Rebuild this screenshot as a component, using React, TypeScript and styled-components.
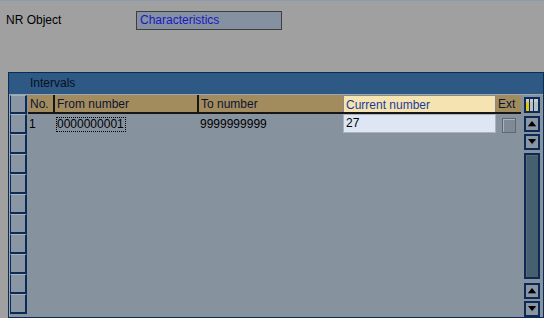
import styled, { createGlobalStyle } from 'styled-components';

const GlobalStyle = createGlobalStyle`
  html, body { margin: 0; padding: 0; background: #a0a0a0; }
  body { font-family: "Liberation Sans", Arial, sans-serif; font-size: 12px; }
`;

const navy = '#0b2a55';
const bodyBg = '#87929f';

const Screen = styled.div`
  width: 544px; height: 318px; box-sizing: border-box;
  border-top: 1px solid #8b9bb0;
  background: #a0a0a0; overflow: hidden;
`;

const HeaderArea = styled.div`
  height: 71px; box-sizing: border-box;
  padding: 10px 0 0 6px;
  display: flex; align-items: flex-start;
`;

const Label = styled.div`
  width: 130px; line-height: 19px; color: #000;
`;

const ReadField = styled.div`
  width: 146px; height: 19px; box-sizing: border-box;
  border: 1px solid #3e3e3e; background: #8591a0;
  color: #1818c4; padding-left: 3px; line-height: 17px;
`;

const Panel = styled.div`
  margin-left: 8px; width: 536px; height: 246px; box-sizing: border-box;
  border: 1px solid ${navy}; background: ${bodyBg};
  display: flex; flex-direction: column;
`;

const TitleBar = styled.div`
  height: 21px; background: #2d5984; color: #0a0f20;
  padding-left: 21px; line-height: 21px;
`;

const Body = styled.div`
  flex: 1; display: flex; border-top: 1px solid #9aa6b4;
`;

const SelectorCol = styled.div`
  width: 18px; display: flex; flex-direction: column;
  margin-right: 1px; border-left: 1px solid #9aa6b4; box-sizing: border-box;
`;

const SelectorCell = styled.div<{ $h: number }>`
  height: ${p => p.$h}px; box-sizing: border-box;
  background: #8a96a3;
  border-top: 1px solid #a6b0bd; border-bottom: 2px solid ${navy};
  border-left: 1px solid ${navy}; border-right: 2px solid ${navy};
`;

const Grid = styled.div`
  display: flex; flex-direction: column; width: 493px;
`;

const HeadRow = styled.div`
  display: flex; height: 19px; box-sizing: border-box;
  border-bottom: 2px solid #161616;
`;

const HeadCell = styled.div<{ $w: number; $active?: boolean; $sep?: number }>`
  width: ${p => p.$w}px; box-sizing: border-box;
  background: ${p => (p.$active ? '#f6e3b2' : '#a28c5e')};
  color: ${p => (p.$active ? '#1a3e98' : '#0c1434')};
  border-right: ${p => (p.$sep ? `${p.$sep}px solid #161616` : 'none')};
  ${p => (p.$active ? 'border: 1px solid #8a8a84; border-bottom: none;' : '')}
  padding: 2px 0 0 2px; line-height: 15px; white-space: nowrap; overflow: hidden;
`;

const DataRow = styled.div`
  display: flex; height: 20px; line-height: 20px; color: #000;
`;

const DataCell = styled.div<{ $w: number }>`
  width: ${p => p.$w}px; box-sizing: border-box; padding-left: 1px;
  white-space: nowrap; display: flex; align-items: center;
`;

const Focused = styled.span`
  border: 1px dotted #000; line-height: 13px; padding: 0 1px 0 0;
`;

const InputCell = styled.div<{ $w: number }>`
  width: ${p => p.$w}px; height: 19px; box-sizing: border-box;
  background: #dde6f2; border: 1px solid #a9b3bf;
  padding-left: 2px; line-height: 17px;
`;

const CheckCell = styled.div<{ $w: number }>`
  width: ${p => p.$w}px; display: flex; justify-content: center; align-items: center;
  padding-top: 3px; box-sizing: border-box;
`;

const Checkbox = styled.div`
  width: 14px; height: 15px; box-sizing: border-box;
  border: 1px solid #5e6670; box-shadow: inset 1px 1px 0 #aab3bd;
  background: #7f8a96;
`;

const RightCol = styled.div`
  width: 22px; display: flex; flex-direction: column; align-items: flex-start;
  padding-left: 3px; box-sizing: border-box;
`;

const IconCell = styled.div`
  height: 19px; display: flex; align-items: center;
`;

const ScrollBtn = styled.div`
  width: 16px; height: 16px; box-sizing: border-box; margin-top: 2px;
  border: 2px solid ${navy}; background: #8a96a3;
  display: flex; align-items: center; justify-content: center;
`;

const Track = styled.div`
  width: 16px; height: 126px; box-sizing: border-box; margin-top: 3px; margin-bottom: 2px;
  border: 2px solid ${navy}; background: #46606f;
  box-shadow: inset 1px 1px 0 #5c6b78;
`;

const rows = Array.from({ length: 10 });

function Arrow({ up }: { up?: boolean }) {
  return (
    <svg width="10" height="6" viewBox="0 0 10 6">
      {up ? (
        <>
          <polygon points="5,0 9,5 1,5" fill="#000" />
          <line x1="1" y1="5.5" x2="9" y2="5.5" stroke="#5a6470" />
        </>
      ) : (
        <>
          <polygon points="1,0 9,0 5,5" fill="#000" />
          <line x1="5" y1="5.5" x2="9" y2="1" stroke="#5a6470" />
        </>
      )}
    </svg>
  );
}

function ColumnIcon() {
  return (
    <svg width="16" height="16" viewBox="0 0 16 16">
      <rect x="0" y="0" width="16" height="16" fill={navy} />
      <rect x="2" y="2" width="12" height="3" fill="#c7ccd3" />
      <rect x="2" y="5" width="3" height="9" fill="#e8c410" />
      <rect x="6" y="5" width="3" height="9" fill="#b6bec8" />
      <rect x="10" y="5" width="4" height="9" fill="#b6bec8" />
      <rect x="5" y="2" width="1" height="12" fill={navy} />
      <rect x="9" y="2" width="1" height="12" fill={navy} />
    </svg>
  );
}

export default function App() {
  return (
    <Screen>
      <GlobalStyle />
      <HeaderArea>
        <Label>NR Object</Label>
        <ReadField>Characteristics</ReadField>
      </HeaderArea>
      <Panel>
        <TitleBar>Intervals</TitleBar>
        <Body>
          <SelectorCol>
            <SelectorCell $h={19} />
            {rows.map((_, i) => <SelectorCell key={i} $h={20} />)}
          </SelectorCol>
          <Grid>
            <HeadRow>
              <HeadCell $w={27} $sep={2}>No.</HeadCell>
              <HeadCell $w={144} $sep={2}>From number</HeadCell>
              <HeadCell $w={144}>To number</HeadCell>
              <HeadCell $w={153} $active>Current number</HeadCell>
              <HeadCell $w={25}>Ext</HeadCell>
            </HeadRow>
            <DataRow>
              <DataCell $w={27}>1</DataCell>
              <DataCell $w={144}><Focused>0000000001</Focused></DataCell>
              <DataCell $w={144}>9999999999</DataCell>
              <InputCell $w={153}>27</InputCell>
              <CheckCell $w={25}><Checkbox /></CheckCell>
            </DataRow>
          </Grid>
          <RightCol>
            <IconCell><ColumnIcon /></IconCell>
            <ScrollBtn><Arrow up /></ScrollBtn>
            <ScrollBtn><Arrow /></ScrollBtn>
            <Track />
            <ScrollBtn><Arrow up /></ScrollBtn>
            <ScrollBtn><Arrow /></ScrollBtn>
          </RightCol>
        </Body>
      </Panel>
    </Screen>
  );
}
